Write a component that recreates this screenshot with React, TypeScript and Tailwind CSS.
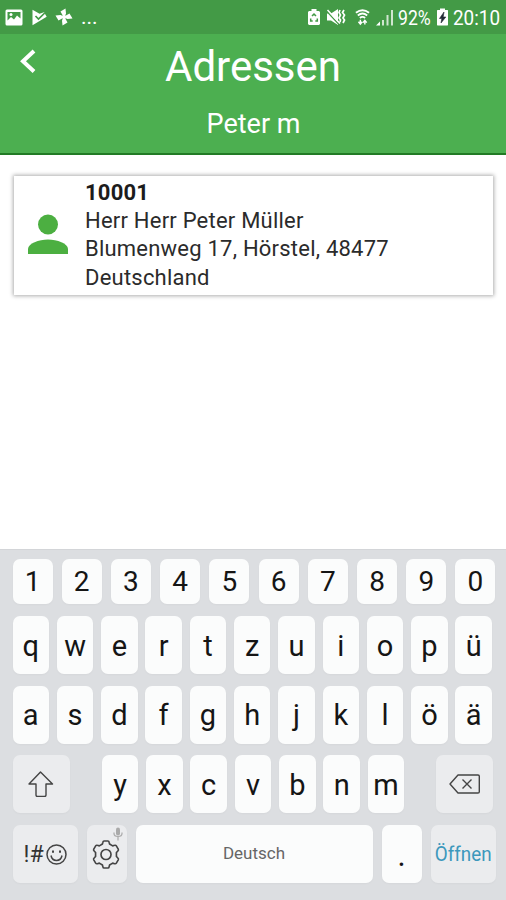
import React from "react";

const numbers = "1234567890".split("");
const top = "qwertzuiopü".split("");
const home = "asdfghjklöä".split("");
const bottom = "yxcvbnm".split("");

const Key = ({ children, className = "" }: { children?: React.ReactNode; className?: string }) => (
  <div className={`flex shrink-0 items-center justify-center rounded-[7px] shadow-[0_1px_2px_rgba(0,0,0,0.03)] ${className}`}>
    {children}
  </div>
);

const letter = "w-[36.5px] h-[58px] bg-[#fbfcfc] text-[29px] pt-[3px]";

function StatusBar() {
  return (
    <div className="flex h-[34px] items-center bg-[#439a46] text-white">
      <svg className="ml-[5px] h-[17px] w-[18px]" viewBox="0 0 18 17">
        <path fillRule="evenodd" fill="#fff" d="M2 .5h14Q17.500.5 17.500 2v13q0 1.500-1.500 1.500H2Q.5 16.500.5 15V2Q.5.5 2 .5ZM2.500 3v8.500L6 8l3 2.500 3-4 3.500 3V3Z" />
        <circle cx="6" cy="5.500" r="1.500" fill="#fff" />
      </svg>
      <svg className="ml-[9px] h-[17px] w-[15px]" viewBox="0 0 15 17">
        <path d="M.5.8 7.500 4.800 12 3.200 14.700 7.800.5 16.300Z" fill="#fff" />
        <path d="m3.500 7 3 3 6.200-6" fill="none" stroke="#439a46" strokeWidth="1.700" />
      </svg>
      <svg className="ml-[8px] h-[18px] w-[18px]" viewBox="0 0 18 18" fill="#fff">
        <path d="M8 8 5.500 3.500 10.500.5 11 5.500 10 8Z" />
        <path d="m10 8 4.500-2.500 3 5-5 .5L10 10Z" />
        <path d="m10 10 2.500 4.500-5 3L7 12.500 8 10Z" />
        <path d="m8 10-4.500 2.500-3-5L5.500 7 8 8Z" />
        <circle cx="9" cy="9" r="2" />
      </svg>
      <span className="ml-[8px] text-[21px] leading-none">...</span>
      <div className="ml-auto flex items-center pr-[5px]">
        <svg className="h-[18px] w-[12px]" viewBox="0 0 12 18">
          <path d="M3.500 1h5v2H11l1 1v12l-1 1H1l-1-1V4l1-1h2.500Z" fill="#fff" />
          <path d="m4 8 2-2 2 2M2.700 10.500V13h2M9.300 10.500V13h-2" fill="none" stroke="#439a46" strokeWidth="1.500" />
        </svg>
        <svg className="ml-[6px] h-[18px] w-[20px]" viewBox="0 0 20 18">
          <path d="M1 5.500h4L12 1v16l-7-4.500H1Z" fill="#fff" />
          <path d="m1 3.500 12 13" stroke="#439a46" strokeWidth="1.300" />
          <path d="m1.500 2 12.500 13.500" stroke="#fff" strokeWidth="1.500" />
          <path d="m14 2-1 2.500L14.500 7 13 10l1.500 2-.5 2M18 2l-1.500 2.500 2 2.500L17 10l1.500 2-1.500 3" fill="none" stroke="#fff" strokeWidth="1.700" />
        </svg>
        <svg className="ml-[9px] h-[18px] w-[15px]" viewBox="0 0 16 18" fill="none" stroke="#fff">
          <path d="M1 4.500Q8-1 15 4.500M3 7.300q5-4 10 0M5.200 10q2.800-2.200 5.600 0" strokeWidth="2" />
          <path d="m3.700 14 2 2.500 2-2.500M8.500 15l2-2.500 2 2.500M5.700 16v-4M10.500 13v4" strokeWidth="1.500" />
        </svg>
        <svg className="ml-[6px] h-[18px] w-[18px]" viewBox="0 0 18 18" fill="#fff">
          <path d="M0 17.500 4 13.500v4Z" />
          <path d="M6 12h2v5.500H6Z" opacity=".75" />
          <path d="M10.500 7h2v10.500h-2Z" opacity=".75" />
          <path d="M15 2h2v15.500h-2Z" opacity=".75" />
        </svg>
        <span className="ml-[4px] w-[36px] whitespace-nowrap pt-[2px] text-[21px] leading-none"><span className="inline-block origin-left scale-x-[0.84]">92%</span></span>
        <svg className="ml-[3px] h-[18px] w-[11px]" viewBox="0 0 11 18">
          <path d="M3 .5h5V2h2.500l.5.500V17l-.5.500H.5L0 17V2.500L.5 2H3Z" fill="#fff" />
          <path d="M7 4 2.500 10.500h2.300L4 15l4.800-6H6.200Z" fill="#222a35" stroke="#222a35" strokeWidth=".6" />
        </svg>
        <span className="ml-[5px] w-[48px] whitespace-nowrap pt-[2px] text-[21px] leading-none"><span className="inline-block origin-left scale-x-[0.9]">20:10</span></span>
      </div>
    </div>
  );
}

export default function App() {
  return (
    <div className="flex h-[900px] w-[506px] flex-col overflow-hidden bg-white font-['Roboto',sans-serif]">
      <StatusBar />
      <header className="grid h-[121px] grid-cols-[60px_1fr_60px] grid-rows-[66px_1fr] border-b-2 border-[#227a25] bg-[#4caf50] text-white">
        <svg className="ml-[20px] mt-[15px] h-[24px] w-[16px]" viewBox="0 0 16 24" fill="none" stroke="#fff" strokeWidth="4">
          <path d="M14 2 3 12.200 14 22.500" />
        </svg>
        <h1 className="text-center text-[42px] leading-[65px]">Adressen</h1>
        <p className="col-span-3 pl-[1px] text-center text-[27px] leading-[48px]">Peter m</p>
      </header>

      <main className="flex-1 px-[13.500px] pt-[21px]">
        <section className="flex h-[118.500px] bg-white shadow-[0_0_4px_1px_rgba(0,0,0,0.32)]">
          <svg className="ml-[14.500px] mt-[38px] h-[41px] w-[40px]" viewBox="0 0 40 41" fill="#4caf41">
            <circle cx="20" cy="10.500" r="10" />
            <path d="M0 40v-5C0 29.500 11 25.500 20 25.500s20 4 20 9.500v5Z" />
          </svg>
          <div className="ml-[17px] pt-[3px] text-[22px] leading-[28.200px] tracking-[0.220px] text-[#2b2b2b]">
            <p className="font-bold text-[#1c1c1c]">10001</p>
            <p>Herr Herr Peter Müller</p>
            <p>Blumenweg 17, Hörstel, 48477</p>
            <p>Deutschland</p>
          </div>
        </section>
      </main>

      <footer className="flex h-[351px] flex-col border-t border-[#d3d5d8] bg-[#dcdee1] pl-[12.500px] pt-[9px] text-[#151515]">
        <div className="flex w-[483px] justify-between">
          {numbers.map((n) => (
            <Key key={n} className="h-[45px] w-[40px] bg-[#fbfcfc] pt-[1px] text-[28px]">{n}</Key>
          ))}
        </div>
        <div className="mt-[12px] flex w-[479.500px] justify-between">
          {top.map((k) => <Key key={k} className={letter}>{k}</Key>)}
        </div>
        <div className="mt-[11.500px] flex w-[479.500px] justify-between">
          {home.map((k) => <Key key={k} className={letter}>{k}</Key>)}
        </div>
        <div className="mt-[11.500px] flex w-[480px] justify-between">
          <Key className="h-[58px] w-[57px] bg-[#ebecee]">
            <svg className="h-[26px] w-[26px]" viewBox="0 0 26 26" fill="none" stroke="#444" strokeWidth="1.400" strokeLinejoin="round">
              <path d="M12.500 1 24.500 13H18v11q0 1.500-1.500 1.500h-7Q8 25.500 8 24V13H1Z" />
            </svg>
          </Key>
          <div className="ml-[1px] flex w-[302.500px] justify-between">
            {bottom.map((k) => <Key key={k} className={letter}>{k}</Key>)}
          </div>
          <Key className="h-[58px] w-[57px] bg-[#ebecee]">
            <svg className="h-[20px] w-[31px]" viewBox="0 0 31 20" fill="none" stroke="#444" strokeWidth="1.400" strokeLinejoin="round">
              <path d="M1 10 9 1h20q1.300 0 1.300 1.300v15.400Q30.300 19 29 19H9Z" />
              <path d="m13.500 5.500 9 9m0-9-9 9" />
            </svg>
          </Key>
        </div>
        <div className="mt-[12px] flex w-[483px] justify-between">
          <Key className="h-[58px] w-[65px] bg-[#ebecee]">
            <span className="text-[23px] leading-none text-[#333]">!#</span>
            <svg className="ml-[2px] h-[21px] w-[21px]" viewBox="0 0 21 21" fill="none" stroke="#444" strokeWidth="1.500">
              <circle cx="10.500" cy="10.500" r="9.500" />
              <path d="M5 11.500q1 5 5.500 5t5.500-5" />
              <path d="M7 6.500v2.300M14 6.500v2.300" strokeWidth="2" />
            </svg>
          </Key>
          <Key className="relative h-[58px] w-[40px] bg-[#ebecee]">
            <svg className="mr-[1px] h-[29px] w-[28px]" viewBox="0 0 29 30" fill="none" stroke="#444" strokeWidth="1.700" strokeLinejoin="round">
              <path d="M12.500 1h4q1 0 1.200 1.200l.5 2 3.200 1.900 2-.6q1.200-.4 1.800.6l2 3.400q.5 1-.4 1.800L25.300 13v4l1.500 1.700q.9.800.4 1.800l-2 3.400q-.6 1-1.800.6l-2-.6-3.200 1.900-.5 2q-.2 1.200-1.200 1.200h-4q-1 0-1.200-1.200l-.5-2-3.200-1.900-2 .6q-1.200.4-1.800-.6l-2-3.400q-.5-1 .4-1.800L3.700 17v-4l-1.500-1.700q-.9-.8-.4-1.800l2-3.400q.6-1 1.800-.6l2 .6 3.200-1.900.5-2Q11.500 1 12.500 1Z" />
              <circle cx="14.500" cy="15" r="5.200" />
            </svg>
            <svg className="absolute right-[4px] top-[2px] h-[14px] w-[10px]" viewBox="0 0 10 13">
              <rect x="3" width="4" height="8" rx="2" fill="#aaa" />
              <path d="M1 5v1q0 3 4 3t4-3V5M5 9v4" fill="none" stroke="#aaa" strokeWidth="1.200" />
            </svg>
          </Key>
          <Key className="h-[58px] w-[237px] bg-[#fbfcfc] text-[17px] text-[#666]">Deutsch</Key>
          <Key className="h-[58px] w-[40px] bg-[#fbfcfc] pt-[5px] text-[31px]">.</Key>
          <Key className="h-[58px] w-[65px] bg-[#ebecee] text-[#3c98bc]">
            <span className="scale-x-[0.940] text-[20px]">Öffnen</span>
          </Key>
        </div>
      </footer>
    </div>
  );
}
